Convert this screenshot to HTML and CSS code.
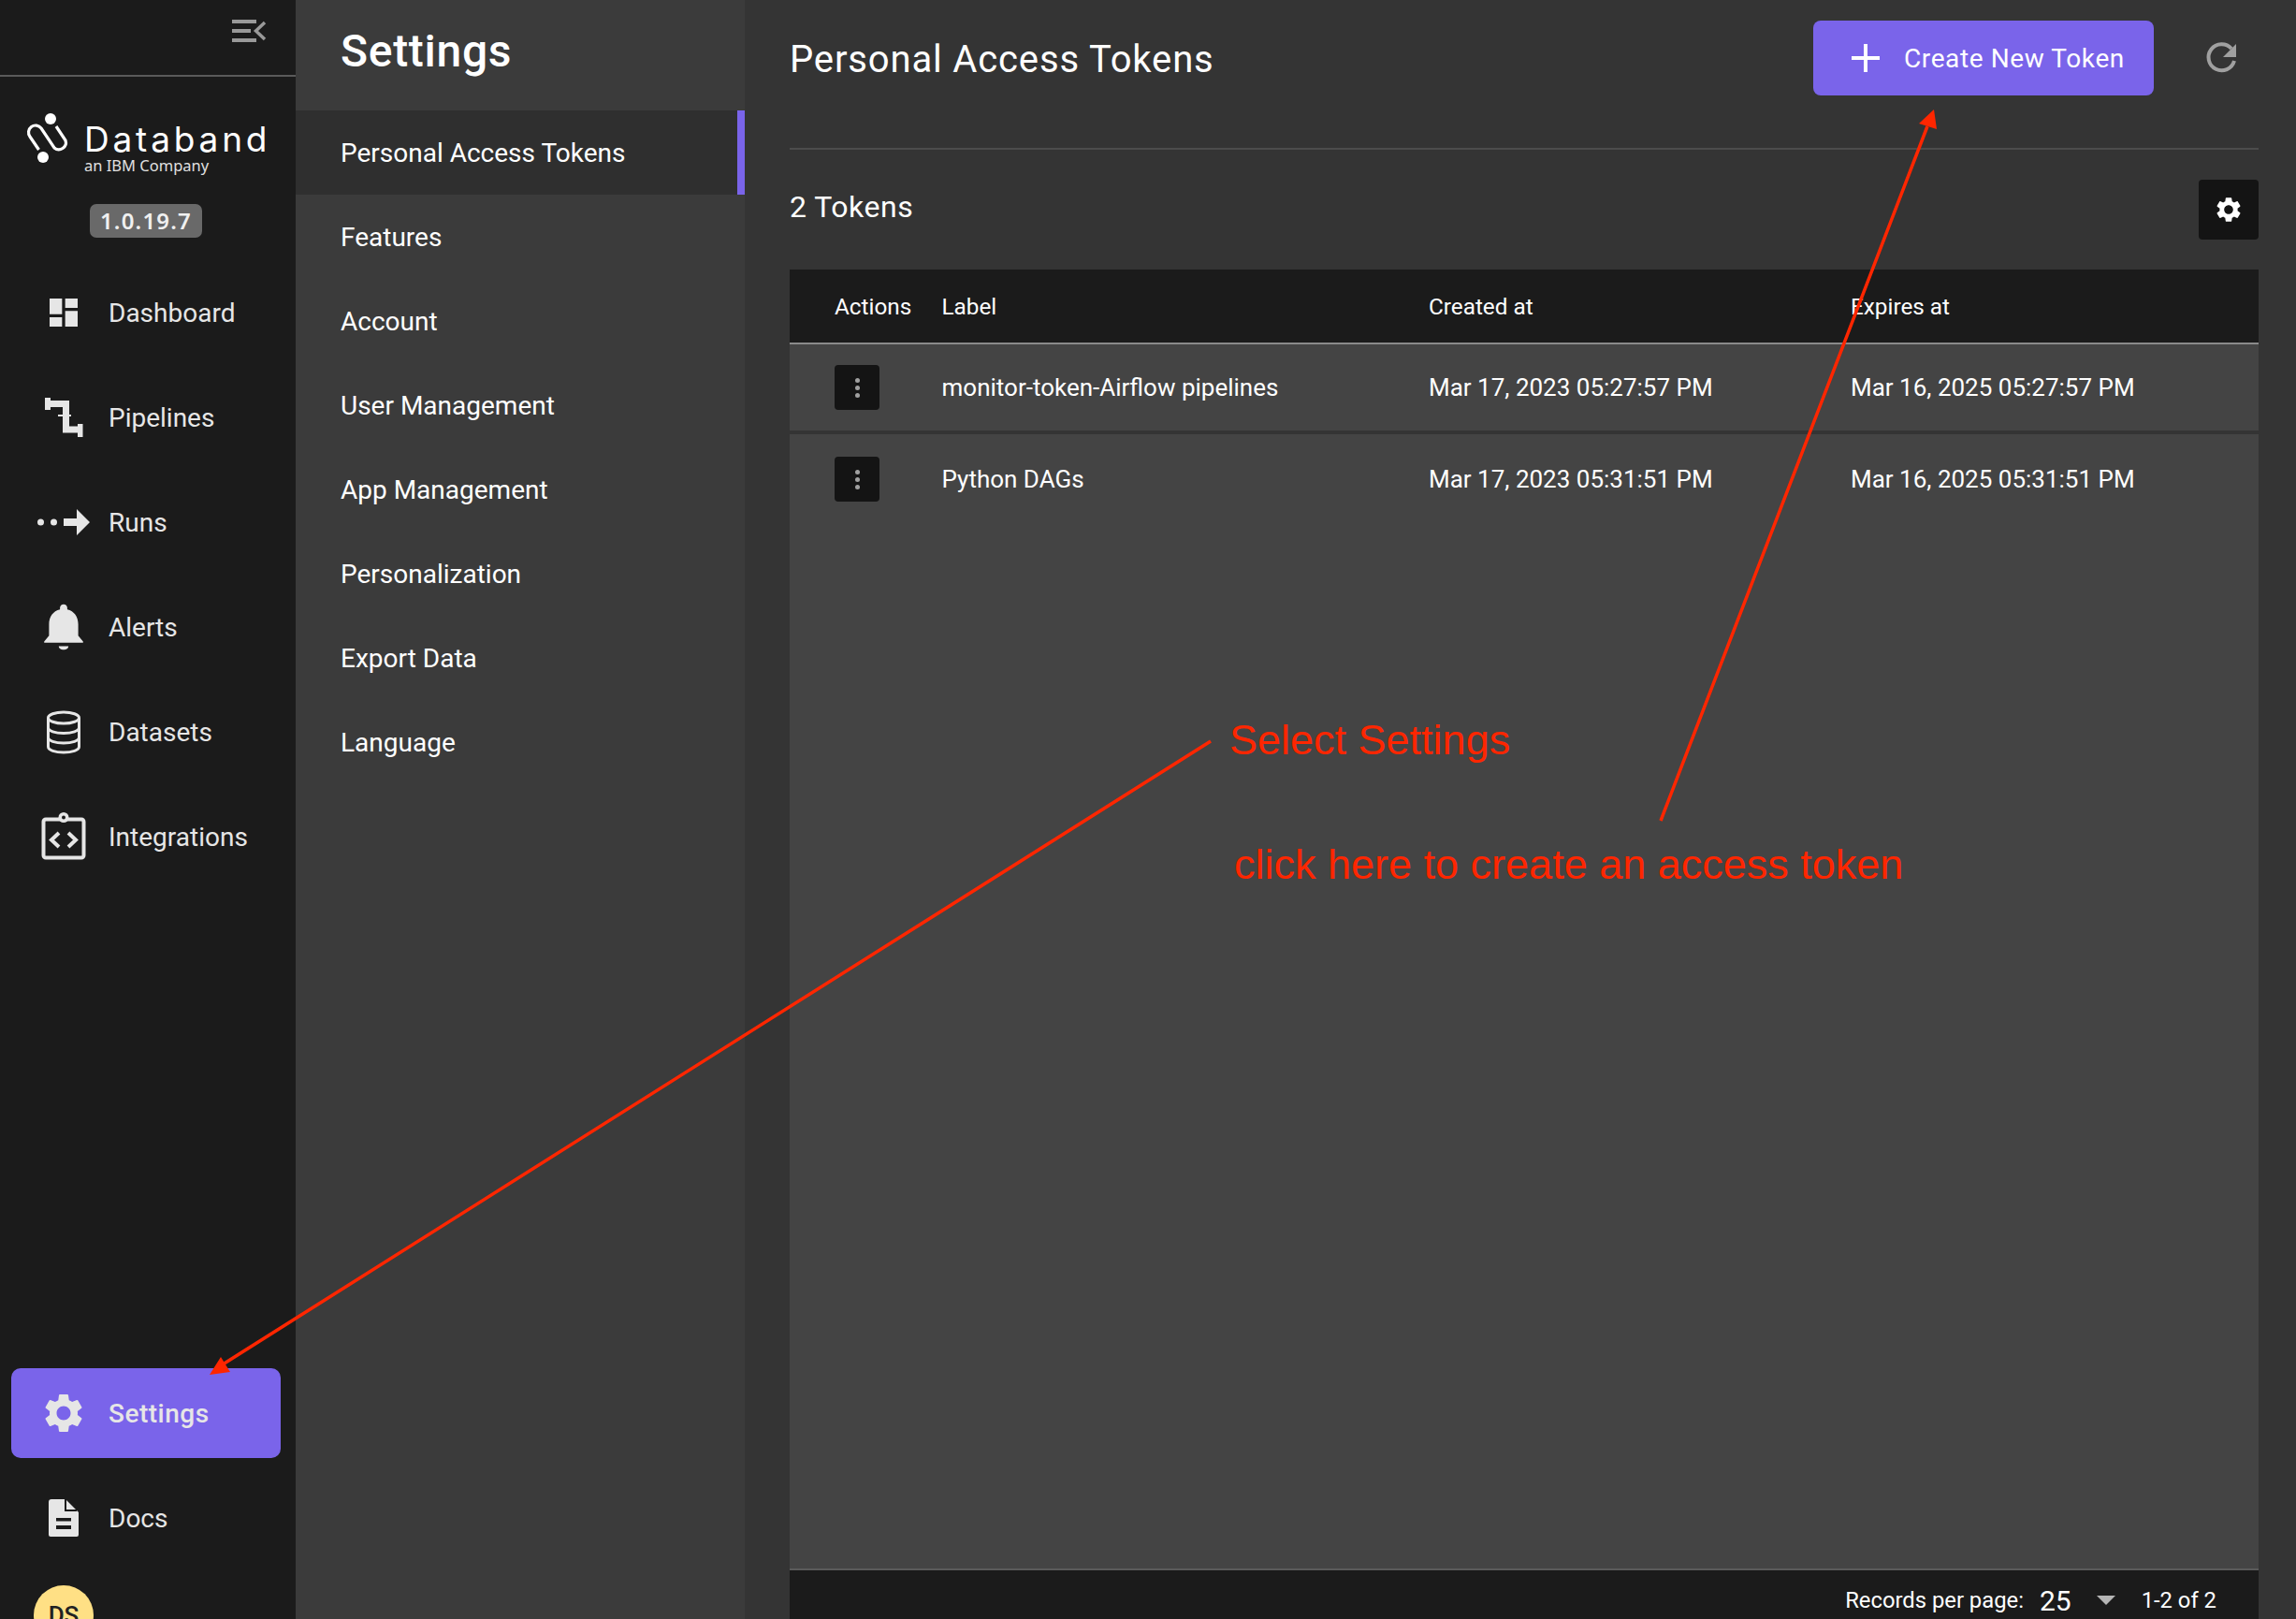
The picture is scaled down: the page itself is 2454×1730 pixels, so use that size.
FILE: index.html
```html
<!DOCTYPE html>
<html lang="en">
<head>
    <meta charset="UTF-8">
    <title>Databand - Personal Access Tokens</title>
    <link rel="stylesheet" href="styles.css">
</head>
<body>

    <svg class="icon-defs" width="0" height="0">
        <symbol id="gear" viewBox="0 0 24 24">
            <path d="M19.14 12.94c.04-.3.06-.61.06-.94 0-.32-.02-.64-.07-.94l2.03-1.58c.18-.14.23-.41.12-.61l-1.92-3.32c-.12-.22-.37-.29-.59-.22l-2.39.96c-.5-.38-1.03-.7-1.62-.94l-.36-2.54c-.04-.24-.24-.41-.48-.41h-3.84c-.24 0-.43.17-.47.41l-.36 2.54c-.59.24-1.13.57-1.62.94l-2.39-.96c-.22-.08-.47 0-.59.22L2.74 8.87c-.12.21-.08.47.12.61l2.03 1.58c-.05.3-.09.63-.09.94s.02.64.07.94l-2.03 1.58c-.18.14-.23.41-.12.61l1.92 3.32c.12.22.37.29.59.22l2.39-.96c.5.38 1.03.7 1.62.94l.36 2.54c.05.24.24.41.48.41h3.84c.24 0 .44-.17.47-.41l.36-2.54c.59-.24 1.13-.56 1.62-.94l2.39.96c.22.08.47 0 .59-.22l1.92-3.32c.12-.22.07-.47-.12-.61l-2.01-1.58zM12 15.6c-1.98 0-3.6-1.62-3.6-3.6s1.62-3.6 3.6-3.6 3.6 1.62 3.6 3.6-1.62 3.6-3.6 3.6z"/>
        </symbol>
    </svg>

    <div class="app">

        <!-- main sidebar -->
        <aside class="sidebar">
            <div class="sidebar-top">
                <svg class="collapse-icon" width="40" height="30" viewBox="0 0 40 30">
                    <path d="M0 2h26v4H0zM0 12h20v4H0zM0 22h26v4H0z" fill="#999"/>
                    <path d="M35 5l-9.500 9 9.500 9" fill="none" stroke="#999" stroke-width="3.500"/>
                </svg>
            </div>

            <div class="brand">
                <svg class="brand-mark" width="50" height="60" viewBox="25 118 50 60">
                    <circle cx="54" cy="127" r="6" fill="#fff"/>
                    <circle cx="46" cy="168" r="6" fill="#fff"/>
                    <path d="M41.500 160L32 146A7.500 7.500 0 0 1 44 137L58 158A7.500 7.500 0 0 0 70 150L60 135" fill="none" stroke="#fff" stroke-width="3.200"/>
                </svg>
                <div class="brand-text">
                    <div class="brand-name">Databand</div>
                    <div class="brand-sub">an IBM Company</div>
                </div>
            </div>

            <div class="version-wrap"><span class="version">1.0.19.7</span></div>

            <nav class="nav-main">
                <a class="nav-item">
                    <svg class="nav-icon" viewBox="0 0 56 56"><path transform="translate(8 8) scale(1.667)" d="M3 13h8V3H3v10zm0 8h8v-6H3v6zm10 0h8V11h-8v10zm0-18v6h8V3h-8z"/></svg>
                    <span>Dashboard</span>
                </a>
                <a class="nav-item">
                    <svg class="nav-icon" viewBox="0 0 56 56">
                        <path d="M8 7h6v13H8zM43 35h5.500v14H43z"/>
                        <path d="M14 13.500h16.500V41H43" fill="none" stroke="#e6e6e6" stroke-width="7"/>
                        <path d="M22 26h14" stroke="#e6e6e6" stroke-width="2"/>
                    </svg>
                    <span>Pipelines</span>
                </a>
                <a class="nav-item">
                    <svg class="nav-icon" viewBox="0 0 56 56">
                        <circle cx="3.500" cy="28" r="3.500"/>
                        <circle cx="17.500" cy="28" r="3.500"/>
                        <path d="M28 24h14v-10l14 14-14 14v-10H28z"/>
                    </svg>
                    <span>Runs</span>
                </a>
                <a class="nav-item">
                    <svg class="nav-icon" viewBox="0 0 56 56">
                        <path transform="translate(28 28) scale(2.600 2.480) translate(-12 -12.250)" d="M12 22c1.100 0 2-.6 2-1.500h-4c0 .9.890 1.500 2 1.500zm6-6v-5c0-3.070-1.640-5.640-4.500-6.320V4c0-.83-.67-1.500-1.500-1.500s-1.500.67-1.500 1.500v.68C7.630 5.360 6 7.920 6 11v5l-2 2.500v.5h16v-.5l-2-2.500z"/>
                    </svg>
                    <span>Alerts</span>
                </a>
                <a class="nav-item">
                    <svg class="nav-icon" viewBox="0 0 56 56">
                        <g fill="none" stroke="#e6e6e6" stroke-width="3">
                            <ellipse cx="28" cy="13" rx="16.500" ry="6"/>
                            <path d="M11.500 13v31c0 3.500 7.500 6 16.500 6s16.500-2.500 16.500-6V13"/>
                            <path d="M11.500 23.500c0 3.500 7.500 6 16.500 6s16.500-2.500 16.500-6M11.500 34c0 3.500 7.500 6 16.500 6s16.500-2.500 16.500-6"/>
                        </g>
                    </svg>
                    <span>Datasets</span>
                </a>
                <a class="nav-item">
                    <svg class="nav-icon" viewBox="0 0 56 56">
                        <rect x="6.500" y="9.500" width="43" height="41" rx="2.500" fill="none" stroke="#e6e6e6" stroke-width="4"/>
                        <circle cx="28" cy="7.500" r="5.500"/>
                        <circle cx="28" cy="7.500" r="2" fill="#1b1b1b"/>
                        <path d="M23 24l-8 7.500 8 7.500M33 24l8 7.500-8 7.500" fill="none" stroke="#e6e6e6" stroke-width="4"/>
                    </svg>
                    <span>Integrations</span>
                </a>
            </nav>

            <div class="sidebar-bottom">
                <a class="nav-item active">
                    <svg class="nav-icon" viewBox="0 0 56 56"><use href="#gear" x="3" y="3" width="50" height="50"/></svg>
                    <span>Settings</span>
                </a>
                <a class="nav-item">
                    <svg class="nav-icon" viewBox="0 0 56 56">
                        <path d="M15 8h15l14 14v24a2 2 0 0 1-2 2H14a2 2 0 0 1-2-2V11a3 3 0 0 1 3-3z"/>
                        <path d="M30 8v12h12" fill="none" stroke="#1b1b1b" stroke-width="2"/>
                        <path d="M20 28h16v3.500H20zM20 36h16v4H20z" fill="#1b1b1b"/>
                    </svg>
                    <span>Docs</span>
                </a>
                <div class="avatar">DS</div>
            </div>
        </aside>

        <!-- settings menu -->
        <section class="settings-menu">
            <h1 class="settings-title">Settings</h1>
            <a class="menu-item active">Personal Access Tokens</a>
            <a class="menu-item">Features</a>
            <a class="menu-item">Account</a>
            <a class="menu-item">User Management</a>
            <a class="menu-item">App Management</a>
            <a class="menu-item">Personalization</a>
            <a class="menu-item">Export Data</a>
            <a class="menu-item">Language</a>
        </section>

        <!-- tokens page -->
        <main class="content">
            <header class="content-header">
                <h2 class="page-title">Personal Access Tokens</h2>
                <button class="btn-create">
                    <svg width="30" height="30" viewBox="0 0 30 30"><path d="M13 0h4v13h13v4H17v13h-4V17H0v-4h13z" fill="#fff"/></svg>
                    <span>Create New Token</span>
                </button>
                <svg class="refresh-icon" width="40" height="40" viewBox="0 0 40 40">
                    <path d="M31 10A14 14 0 1 0 34 23" fill="none" stroke="#a0a0a0" stroke-width="4"/>
                    <path d="M36 5L22 19h14z" fill="#a0a0a0"/>
                </svg>
            </header>

            <div class="tokens-bar">
                <span class="tokens-count">2 Tokens</span>
                <button class="btn-columns"><svg width="32" height="32"><use href="#gear"/></svg></button>
            </div>

            <div class="table">
                <div class="table-row table-head">
                    <div>Actions</div>
                    <div>Label</div>
                    <div>Created at</div>
                    <div>Expires at</div>
                </div>
                <div class="table-body">
                    <div class="table-row token-row">
                        <div><button class="btn-kebab"><i></i><i></i><i></i></button></div>
                        <div>monitor-token-Airflow pipelines</div>
                        <div>Mar 17, 2023 05:27:57 PM</div>
                        <div>Mar 16, 2025 05:27:57 PM</div>
                    </div>
                    <div class="table-row token-row">
                        <div><button class="btn-kebab"><i></i><i></i><i></i></button></div>
                        <div>Python DAGs</div>
                        <div>Mar 17, 2023 05:31:51 PM</div>
                        <div>Mar 16, 2025 05:31:51 PM</div>
                    </div>
                </div>
                <div class="table-footer">
                    <span>Records per page:</span>
                    <span class="page-size">25</span>
                    <span class="page-caret"></span>
                    <span>1-2 of 2</span>
                </div>
            </div>
        </main>
    </div>

    <!-- red notes drawn on top of the screenshot -->
    <svg class="notes-arrows" width="2454" height="1730" viewBox="0 0 2454 1730">
        <path d="M1294 792L238 1458M1775 877L2060 135" fill="none" stroke="#ff2600" stroke-width="3.500"/>
        <path d="M224 1469L236 1450 246 1466zM2067 117L2051 132 2070 138z" fill="#ff2600"/>
    </svg>
    <div class="note note-settings">Select Settings</div>
    <div class="note note-token">click here to create an access token</div>

</body>
</html>
```

FILE: styles.css
```css
:root {
    --sidebar-bg: #1b1b1b;
    --menu-bg: #3b3b3b;
    --menu-active: #2f2f2f;
    --content-bg: #343434;
    --table-bg: #444444;
    --primary: #7a64ea;
    --text: #ffffff;
    --nav-text: #e6e6e6;
    --note: #ff2600;
}

* {
    box-sizing: border-box;
}

html, body {
    height: 100%;
}

body {
    margin: 0;
    overflow: hidden;
    position: relative;
    font-family: Roboto, "Liberation Sans", sans-serif;
    color: var(--text);
    background-color: var(--content-bg);
}

.icon-defs {
    position: absolute;
}

.app {
    display: flex;
    height: 1730px;
}

/* sidebar */
.sidebar {
    width: 316px;
    flex-shrink: 0;
    display: flex;
    flex-direction: column;
    overflow: hidden;
    background-color: var(--sidebar-bg);
}

.sidebar-top {
    height: 82px;
    flex-shrink: 0;
    padding: 19px 0 0 248px;
    border-bottom: 2px solid #5a5a5a;
}

.collapse-icon {
    display: block;
}

.brand {
    display: flex;
    margin-top: 36px;
    padding-left: 25px;
    height: 66px;
}

.brand-mark {
    flex-shrink: 0;
}

.brand-text {
    margin-left: 15px;
}

.brand-name {
    font-family: Inter, sans-serif;
    font-size: 37px;
    line-height: 36px;
    margin-top: 13px;
    letter-spacing: 3.800px;
}

.brand-sub {
    font-family: "Noto Sans", sans-serif;
    font-size: 16.500px;
    line-height: 20px;
    color: #e0e0e0;
}

.version-wrap {
    display: flex;
    justify-content: center;
    margin-top: 34px;
    padding-right: 4px;
}

.version {
    width: 120px;
    height: 36px;
    border-radius: 7px;
    text-align: center;
    font-family: "Noto Sans", sans-serif;
    font-size: 24px;
    font-weight: 600;
    line-height: 36px;
    letter-spacing: 1.200px;
    color: #f0f0f0;
    background-color: #696969;
}

.nav-main {
    flex: 1;
    margin-top: 24px;
}

.nav-item {
    display: flex;
    align-items: center;
    height: 112px;
    padding-left: 40px;
    font-size: 28px;
    color: var(--nav-text);
}

.nav-icon {
    width: 56px;
    height: 56px;
    flex-shrink: 0;
    margin-right: 20px;
    overflow: visible;
    fill: var(--nav-text);
}

.sidebar-bottom {
    height: 268px;
    flex-shrink: 0;
    overflow: hidden;
}

.nav-item.active {
    height: 96px;
    margin: 0 16px 8px 12px;
    padding-left: 28px;
    border-radius: 10px;
    font-weight: 500;
    letter-spacing: .5px;
    background-color: var(--primary);
}

.avatar {
    width: 64px;
    height: 64px;
    margin: 16px 0 0 36px;
    border-radius: 50%;
    text-align: center;
    font-size: 26px;
    font-weight: 500;
    line-height: 64px;
    color: #222222;
    background-color: #ffe085;
}

/* settings menu */
.settings-menu {
    width: 480px;
    flex-shrink: 0;
    background-color: var(--menu-bg);
}

.settings-title {
    height: 118px;
    margin: 0;
    padding: 26px 0 0 48px;
    font-size: 48px;
    font-weight: 500;
    line-height: 58px;
    letter-spacing: .7px;
}

.menu-item {
    display: flex;
    align-items: center;
    height: 90px;
    padding-left: 48px;
    font-size: 28px;
}

.menu-item.active {
    background-color: var(--menu-active);
    border-right: 8px solid var(--primary);
}

/* tokens page */
.content {
    flex: 1;
    display: flex;
    flex-direction: column;
    padding: 0 40px 0 48px;
}

.content-header {
    display: flex;
    align-items: center;
    height: 160px;
    flex-shrink: 0;
    padding-bottom: 34px;
    border-bottom: 2px solid #4c4c4c;
}

.page-title {
    flex: 1;
    margin: 2px 0 0;
    font-size: 40px;
    font-weight: 400;
    letter-spacing: .85px;
}

.btn-create {
    display: flex;
    align-items: center;
    width: 364px;
    height: 80px;
    padding: 0 0 0 41px;
    border: none;
    border-radius: 8px;
    font-family: inherit;
    font-size: 28px;
    letter-spacing: .6px;
    color: var(--text);
    background-color: var(--primary);
}

.btn-create span {
    margin-left: 26px;
}

.refresh-icon {
    margin: 0 20px 0 52px;
}

.tokens-bar {
    display: flex;
    align-items: center;
    justify-content: space-between;
    height: 128px;
    flex-shrink: 0;
}

.tokens-count {
    margin-bottom: 6px;
    font-size: 32px;
    letter-spacing: .5px;
}

.btn-columns {
    display: flex;
    align-items: center;
    justify-content: center;
    width: 64px;
    height: 64px;
    padding: 0;
    border: none;
    border-radius: 4px;
    fill: #ffffff;
    background-color: #141414;
}

.table {
    flex: 1;
    min-height: 0;
    display: flex;
    flex-direction: column;
}

.table-row {
    display: grid;
    grid-template-columns: 162.500px 520.500px 451px 1fr;
    align-items: center;
    font-size: 26px;
}

.table-row > div:first-child {
    padding-left: 48px;
}

.table-head {
    height: 80px;
    flex-shrink: 0;
    font-size: 24.300px;
    background-color: var(--sidebar-bg);
    border-bottom: 2px solid #8a8a8a;
}

.table-body {
    flex: 1;
    background-color: var(--table-bg);
}

.token-row {
    height: 96px;
    border-bottom: 4px solid #343434;
}

.token-row:last-child {
    border-bottom: none;
}

.btn-kebab {
    display: flex;
    flex-direction: column;
    align-items: center;
    justify-content: center;
    gap: 3px;
    width: 48px;
    height: 48px;
    padding: 0;
    border: none;
    border-radius: 4px;
    background-color: #141414;
}

.btn-kebab i {
    width: 5px;
    height: 5px;
    border-radius: 50%;
    background-color: #a0a0a0;
}

.table-footer {
    display: flex;
    align-items: center;
    justify-content: flex-end;
    height: 54px;
    flex-shrink: 0;
    padding: 12px 45px 0 0;
    border-top: 2px solid #5a5a5a;
    font-size: 23.800px;
    background-color: var(--sidebar-bg);
}

.page-size {
    margin: 0 27px 0 17px;
    font-size: 30px;
}

.page-caret {
    width: 0;
    height: 0;
    margin-right: 28px;
    border-top: 10px solid #b5b5b5;
    border-left: 10px solid transparent;
    border-right: 10px solid transparent;
}

/* red notes */
.notes-arrows {
    position: absolute;
    left: 0;
    top: 0;
    pointer-events: none;
}

.note {
    position: absolute;
    font-family: "Liberation Sans", Arial, sans-serif;
    font-size: 45px;
    line-height: 52px;
    white-space: nowrap;
    color: var(--note);
}

.note-settings {
    left: 1314px;
    top: 765px;
}

.note-token {
    left: 1319px;
    top: 898px;
}
```
